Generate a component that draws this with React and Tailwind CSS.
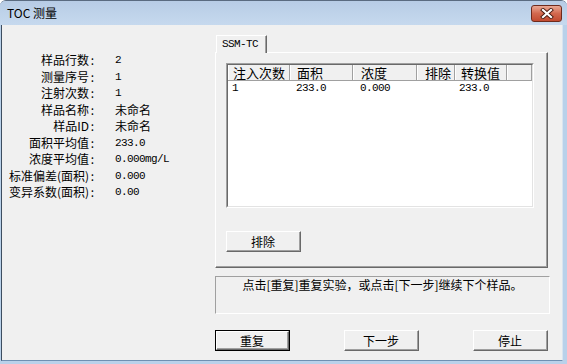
import React from "react";

const M = "font-['Liberation_Mono',monospace] text-[11px] tracking-[-0.6px]";

function Btn({ children, def, className = "" }) {
  return (
    <div className={`${className} ${def ? "border border-black" : ""}`}>
      <div className="h-full w-full border-t border-l border-t-white border-l-white border-r border-b border-r-[#696969] border-b-[#696969]">
        <div className="h-full w-full border-r border-b border-r-[#a0a0a0] border-b-[#a0a0a0] flex items-center justify-center leading-none pt-[1px]">
          {children}
        </div>
      </div>
    </div>
  );
}

const rows = [
  ["样品行数", "2", true],
  ["测量序号", "1", true],
  ["注射次数", "1", true],
  ["样品名称", "未命名", false],
  ["样品ID", "未命名", false],
  ["面积平均值", "233.0", true],
  ["浓度平均值", "0.000mg/L", true],
  ["标准偏差(面积)", "0.000", true],
  ["变异系数(面积)", "0.00", true],
];

const cols = [
  { w: "w-[62px]", h: "注入次数", hp: "pl-[4px]", d: "1", dp: "pl-[4px]" },
  { w: "w-[63px]", h: "面积", hp: "pl-[6px]", d: "233.0", dp: "pl-[6px]" },
  { w: "w-[64px]", h: "浓度", hp: "pl-[7px]", d: "0.000", dp: "pl-[7px]" },
  { w: "w-[38px]", h: "排除", hp: "pl-[7px]", d: "", dp: "pl-[4px]" },
  { w: "w-[52px]", h: "转换值", hp: "pl-[5px]", d: "233.0", dp: "pl-[4px]" },
];

export default function App() {
  return (
    <div className="w-[567px] h-[364px] flex flex-col bg-[#b9d1ea] border-t border-[#5a6b80] rounded-t-[6px] overflow-hidden font-['Noto_Sans_CJK_SC',sans-serif] text-[12px] text-black">
      {/* title bar */}
      <div className="h-[24px] flex items-center justify-between pl-[7px] pr-[5px] bg-gradient-to-b from-[#b7cce5] to-[#c6d9ee]">
        <span className="text-[12px] leading-none">TOC 测量</span>
        <div className="w-[31px] h-[17px] rounded-[3px] border border-[#6e2a1c] bg-gradient-to-b from-[#e9a894] via-[#d2684e] to-[#c24a30] flex items-center justify-center">
          <svg width="14" height="11" viewBox="0 0 14 11">
            <path d="M3 2 L11 9 M11 2 L3 9" stroke="#4a1c12" strokeWidth="4" strokeLinecap="square" />
            <path d="M3 2 L11 9 M11 2 L3 9" stroke="#ffffff" strokeWidth="2.2" strokeLinecap="square" />
          </svg>
        </div>
      </div>

      {/* client wrapper */}
      <div className="flex-1 flex pl-[1px] pr-[4px] pb-[3px]">
        <div className="flex-1 flex bg-[#f0f0f0] border-l border-l-[#3d4d60] border-b border-b-[#6f90b2] border-r border-r-[#d9e4f0]">
          {/* left column */}
          <div className="w-[213px] pt-[27px]">
            <div className="grid grid-cols-[94px_1fr] gap-x-[19px]">
              {rows.map(([l, v, mono]) => (
                <React.Fragment key={l}>
                  <div className="h-[16.5px] leading-[16.5px] text-right whitespace-nowrap">
                    {l}
                    <span className="inline-block w-[7px] text-center">:</span>
                  </div>
                  <div className={`h-[16.5px] leading-[16.5px] whitespace-nowrap ${mono ? M : ""}`}>{v}</div>
                </React.Fragment>
              ))}
            </div>
          </div>

          {/* right column */}
          <div className="w-[335px] flex flex-col pt-[10px]">
            {/* tab */}
            <div className="relative z-10 ml-[1px] -mb-[1px] w-[51px] h-[18px] bg-[#f0f0f0] border-t border-l border-t-white border-l-white border-r border-r-[#696969]">
              <div className={`h-full border-r border-r-[#a0a0a0] pl-[5px] leading-[16px] ${M}`}>SSM-TC</div>
            </div>
            {/* panel */}
            <div className="w-[333px] h-[216px] border-t border-l border-t-white border-l-white border-r border-b border-r-[#696969] border-b-[#696969]">
              <div className="h-full border-r border-b border-r-[#a0a0a0] border-b-[#a0a0a0] pl-[10px] pt-[10px] flex flex-col">
                {/* list */}
                <div className="w-[308px] h-[145px] border-t border-l border-t-[#a0a0a0] border-l-[#a0a0a0] border-r border-b border-r-white border-b-white">
                  <div className="h-full border-t border-l border-t-[#696969] border-l-[#696969] border-r border-b border-r-[#e3e3e3] border-b-[#e3e3e3] bg-white">
                    <div className="flex h-[16px] bg-[#f0f0f0] border-b border-b-[#a0a0a0]">
                      {cols.map((c) => (
                        <div key={c.h} className={`${c.w} ${c.hp} h-full border-l border-l-white border-r border-r-[#a0a0a0] text-[13px] leading-[15px] whitespace-nowrap`}>
                          {c.h}
                        </div>
                      ))}
                      <div className="flex-1 h-full border-l border-l-white border-r border-r-[#a0a0a0]"></div>
                    </div>
                    <div className="flex h-[14px]">
                      {cols.map((c) => (
                        <div key={c.h} className={`${c.w} ${c.dp} leading-[14px] ${M}`}>{c.d}</div>
                      ))}
                    </div>
                  </div>
                </div>
                <Btn className="mt-[23px] w-[75px] h-[21px]">排除</Btn>
              </div>
            </div>
            {/* status */}
            <div className="mt-[8px] w-[335px] h-[38px] border-t border-l border-t-[#a0a0a0] border-l-[#a0a0a0] border-r border-b border-r-white border-b-white text-center leading-[14px] pt-[1px] whitespace-nowrap">
              点击[重复]重复实验，或点击[下一步]继续下个样品。
            </div>
            {/* buttons */}
            <div className="mt-[16px] w-[333px] flex justify-between">
              <Btn def className="w-[75px] h-[21px]">重复</Btn>
              <Btn className="w-[75px] h-[21px]">下一步</Btn>
              <Btn className="w-[75px] h-[21px]">停止</Btn>
            </div>
          </div>
        </div>
      </div>
    </div>
  );
}
